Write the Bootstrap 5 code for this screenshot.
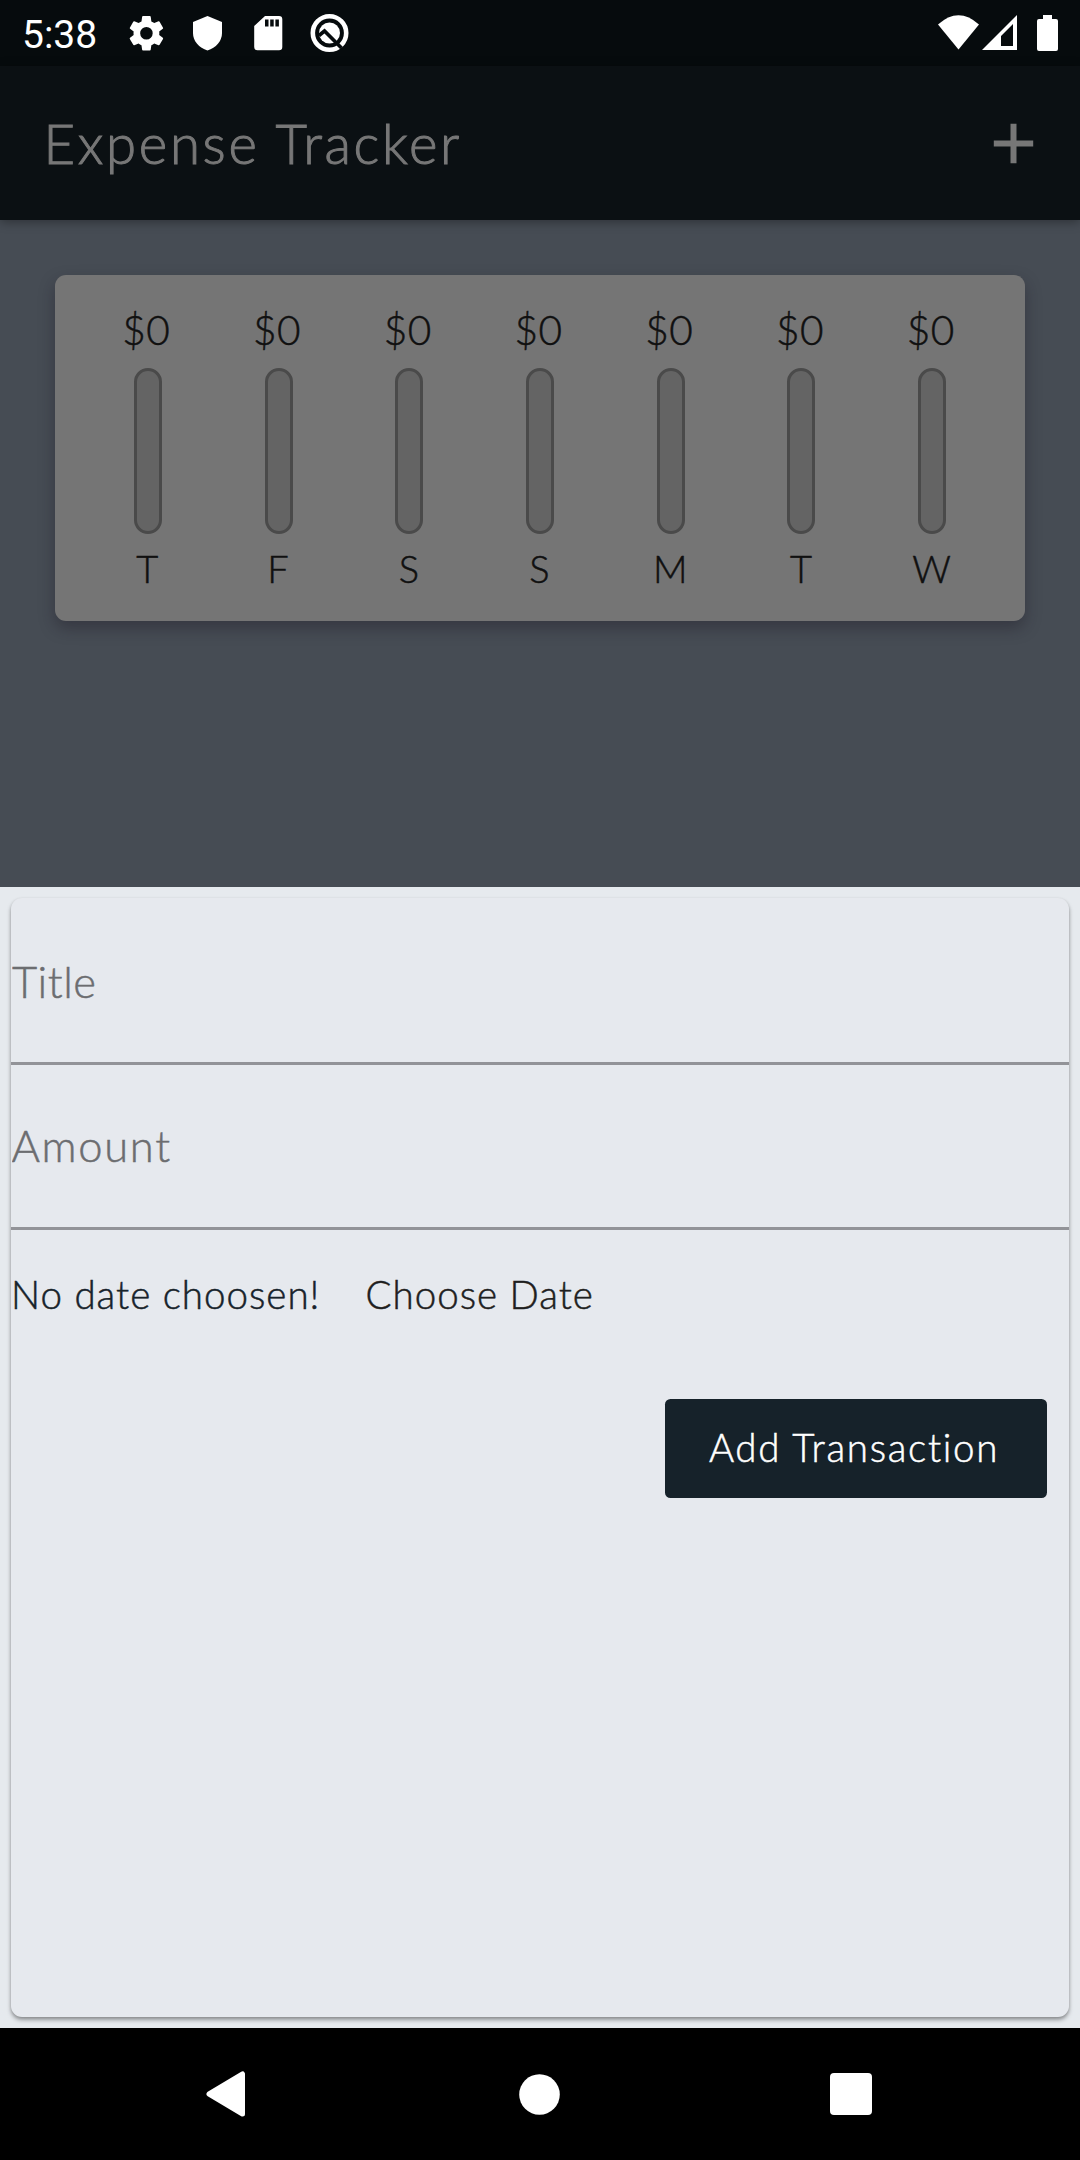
<!DOCTYPE html>
<html lang="en">
<head>
<meta charset="utf-8">
<meta name="viewport" content="width=device-width, initial-scale=1">
<title>Expense Tracker</title>
<link href="https://cdn.jsdelivr.net/npm/bootstrap@5.3.0/dist/css/bootstrap.min.css" rel="stylesheet">
<style>
  body { width: 1080px; height: 2160px; overflow: hidden; background: #464c54; font-family: Lato, "Open Sans", sans-serif; font-weight: 300; color: #101010; -webkit-text-stroke: .5px currentColor; }
  .status-bar { height: 66px; background: #060b0d; color: #fff; padding: 0 21px 0 22px; -webkit-text-stroke: 0; }
  .clock { font: 400 39px/66px Roboto, sans-serif; width: 106px; padding-top: 3px; }
  .status-bar svg, .nav-bar svg { display: block; flex: none; }
  .app-bar { height: 154px; background: #0b1013; color: #777; padding: 0 46px 0 43.500px; box-shadow: 0 2px 10px rgba(0,0,0,.35); -webkit-text-stroke-width: 1px; }
  .app-title { font-size: 54.500px; line-height: 154px; letter-spacing: 2.700px; }
  .chart-card { margin: 55px 55px 0; height: 346px; padding: 27.5px; background: #757575; border: 0; border-radius: 11px; box-shadow: 0 7px 16px rgba(25,20,35,.38); }
  .amount-label { font-size: 40.500px; line-height: 52px; margin: 1px 3px 12px 0; letter-spacing: .5px; }
  .bar-track { width: 28px; height: 166px; border: 3px solid #4a4a4a; border-radius: 14px; background: #646464; }
  .day-label { font-size: 38px; line-height: 48px; margin: 10px 1px 0 0; }
  .sheet { height: 1141px; background: #e6eaee; padding: 11px; }
  .entry-card { height: 1119px; background: #e6e9ee; border: 0; border-radius: 11px; box-shadow: 0 3px 4px rgba(0,0,0,.34), 0 1px 3px rgba(0,0,0,.12); }
  .entry-field.form-control { flex: none; height: 167px; padding: 1px 0 0 1px; border: 0; border-bottom: 3px solid #929398; border-radius: 0; background: transparent; font-size: 43.500px; font-weight: 300; letter-spacing: .5px; }
  .entry-field + .entry-field.form-control { height: 165px; padding: 0 0 2px .5px; letter-spacing: 1.700px; }
  .entry-field::placeholder { color: #6c6d70; opacity: 1; }
  .date-row { height: 132px; font-size: 38.5px; letter-spacing: 1px; padding-bottom: 2px; }
  .date-note { color: #16222a; width: 354.500px; }
  .date-pick.btn { border: 0; padding: 0; font-size: inherit; font-weight: 300; letter-spacing: 1px; color: #1e1e1e; }
  .add-btn.btn { flex: none; width: 382px; height: 99px; margin: 37px 22px 0 0; padding: 0 4px 1px 0; border: 0; border-radius: 5.5px; background: #16222a; color: #fff; font-size: 38.5px; font-weight: 300; letter-spacing: 1.700px; }
  .nav-bar { height: 132px; background: #000; padding: 0 208px 0 206px; }
  .home-key { margin-left: 3px; }
</style>
</head>
<body class="d-flex flex-column">
<header>
  <div class="status-bar d-flex align-items-center">
    <span class="clock">5:38</span>
    <svg width="240" height="66" viewBox="128 0 240 66" fill="#fff">
      <g transform="translate(124.940 11.800) scale(1.790)"><path d="M19.14 12.94c.04-.3.06-.61.06-.94s-.02-.64-.07-.94l2.03-1.58a.49.49 0 0 0 .12-.61l-1.92-3.32a.49.49 0 0 0-.59-.22l-2.39.96c-.5-.38-1.03-.7-1.62-.94l-.36-2.54a.48.48 0 0 0-.48-.41h-3.84c-.24 0-.43.17-.47.41l-.36 2.54c-.59.24-1.13.57-1.62.94l-2.39-.96a.48.48 0 0 0-.59.22L2.74 8.87c-.12.21-.08.47.12.61l2.03 1.58c-.05.3-.09.63-.09.94s.02.64.07.94l-2.03 1.58a.49.49 0 0 0-.12.61l1.92 3.32c.12.22.37.29.59.22l2.39-.96c.5.38 1.03.7 1.62.94l.36 2.54c.05.24.24.41.48.41h3.84c.24 0 .44-.17.47-.41l.36-2.54c.59-.24 1.13-.56 1.62-.94l2.39.96c.22.08.47 0 .59-.22l1.92-3.32a.49.49 0 0 0-.12-.61zM12 15.500A3.500 3.500 0 1 1 12 8.500a3.500 3.500 0 0 1 0 7z"/></g>
      <path d="M207.5 16l14.500 6v11c0 8-6 15-14.500 17.500C199 48 193 41 193 33V22z"/>
      <path fill-rule="evenodd" d="M265 16h14a3.300 3.300 0 0 1 3.300 3.300V47a3.300 3.300 0 0 1-3.300 3.300h-21.500a3.300 3.300 0 0 1-3.300-3.300V26zM265 19.500v7h3.500v-7zM270.200 19.500v7h3.500v-7zM275.400 19.500v7h3.500v-7z"/>
      <circle cx="329.500" cy="33" r="16.700" fill="none" stroke="#fff" stroke-width="4.600"/>
      <circle cx="329.500" cy="33" r="10.500"/>
      <path d="M319 35.500l5.500-4.500 17 17" fill="none" stroke="#060b0d" stroke-width="3.600"/>
    </svg>
    <svg class="ms-auto" width="122" height="66" viewBox="937 0 122 66" fill="#fff">
      <path d="M938 24.500Q958.500 6 979 24.500L958.500 49.500z"/>
      <path fill-rule="evenodd" d="M982 50L1017 15v35zM1001 36v10h12V24z"/>
      <path d="M1043 15h9v4h4a2 2 0 0 1 2 2v28a2 2 0 0 1-2 2h-17a2 2 0 0 1-2-2V21a2 2 0 0 1 2-2h4z"/>
    </svg>
  </div>
  <div class="app-bar d-flex align-items-center justify-content-between">
    <span class="app-title">Expense Tracker</span>
    <svg width="41" height="41" viewBox="0 0 41 41"><path d="M20.500 .8v39.400M.8 20.500h39.400" stroke="#777" stroke-width="6"/></svg>
  </div>
</header>
<main class="flex-grow-1">
  <section class="card chart-card">
    <div class="row g-0 text-center">
      <div class="col d-flex flex-column align-items-center"><span class="amount-label">$0</span><div class="bar-track"></div><span class="day-label">T</span></div>
      <div class="col d-flex flex-column align-items-center"><span class="amount-label">$0</span><div class="bar-track"></div><span class="day-label">F</span></div>
      <div class="col d-flex flex-column align-items-center"><span class="amount-label">$0</span><div class="bar-track"></div><span class="day-label">S</span></div>
      <div class="col d-flex flex-column align-items-center"><span class="amount-label">$0</span><div class="bar-track"></div><span class="day-label">S</span></div>
      <div class="col d-flex flex-column align-items-center"><span class="amount-label">$0</span><div class="bar-track"></div><span class="day-label">M</span></div>
      <div class="col d-flex flex-column align-items-center"><span class="amount-label">$0</span><div class="bar-track"></div><span class="day-label">T</span></div>
      <div class="col d-flex flex-column align-items-center"><span class="amount-label">$0</span><div class="bar-track"></div><span class="day-label">W</span></div>
    </div>
  </section>
</main>
<section class="sheet">
  <form class="card entry-card">
    <input class="form-control entry-field" type="text" placeholder="Title" aria-label="Title">
    <input class="form-control entry-field" type="text" placeholder="Amount" aria-label="Amount">
    <div class="date-row d-flex align-items-center flex-shrink-0">
      <span class="date-note">No date choosen!</span>
      <button type="button" class="btn date-pick">Choose Date</button>
    </div>
    <button type="button" class="btn add-btn align-self-end">Add Transaction</button>
  </form>
</section>
<nav class="nav-bar d-flex align-items-center justify-content-between">
  <svg width="40" height="46" viewBox="0 0 40 46"><path d="M3 23L36.500 3v40z" fill="#fff" stroke="#fff" stroke-width="5" stroke-linejoin="round"/></svg>
  <svg class="home-key" width="41" height="41" viewBox="0 0 41 41"><circle cx="20.500" cy="20.500" r="20.300" fill="#fff"/></svg>
  <svg width="42" height="42" viewBox="0 0 42 42"><rect width="42" height="42" rx="4" fill="#fff"/></svg>
</nav>
<script src="https://cdn.jsdelivr.net/npm/bootstrap@5.3.0/dist/js/bootstrap.bundle.min.js"></script>
</body>
</html>
